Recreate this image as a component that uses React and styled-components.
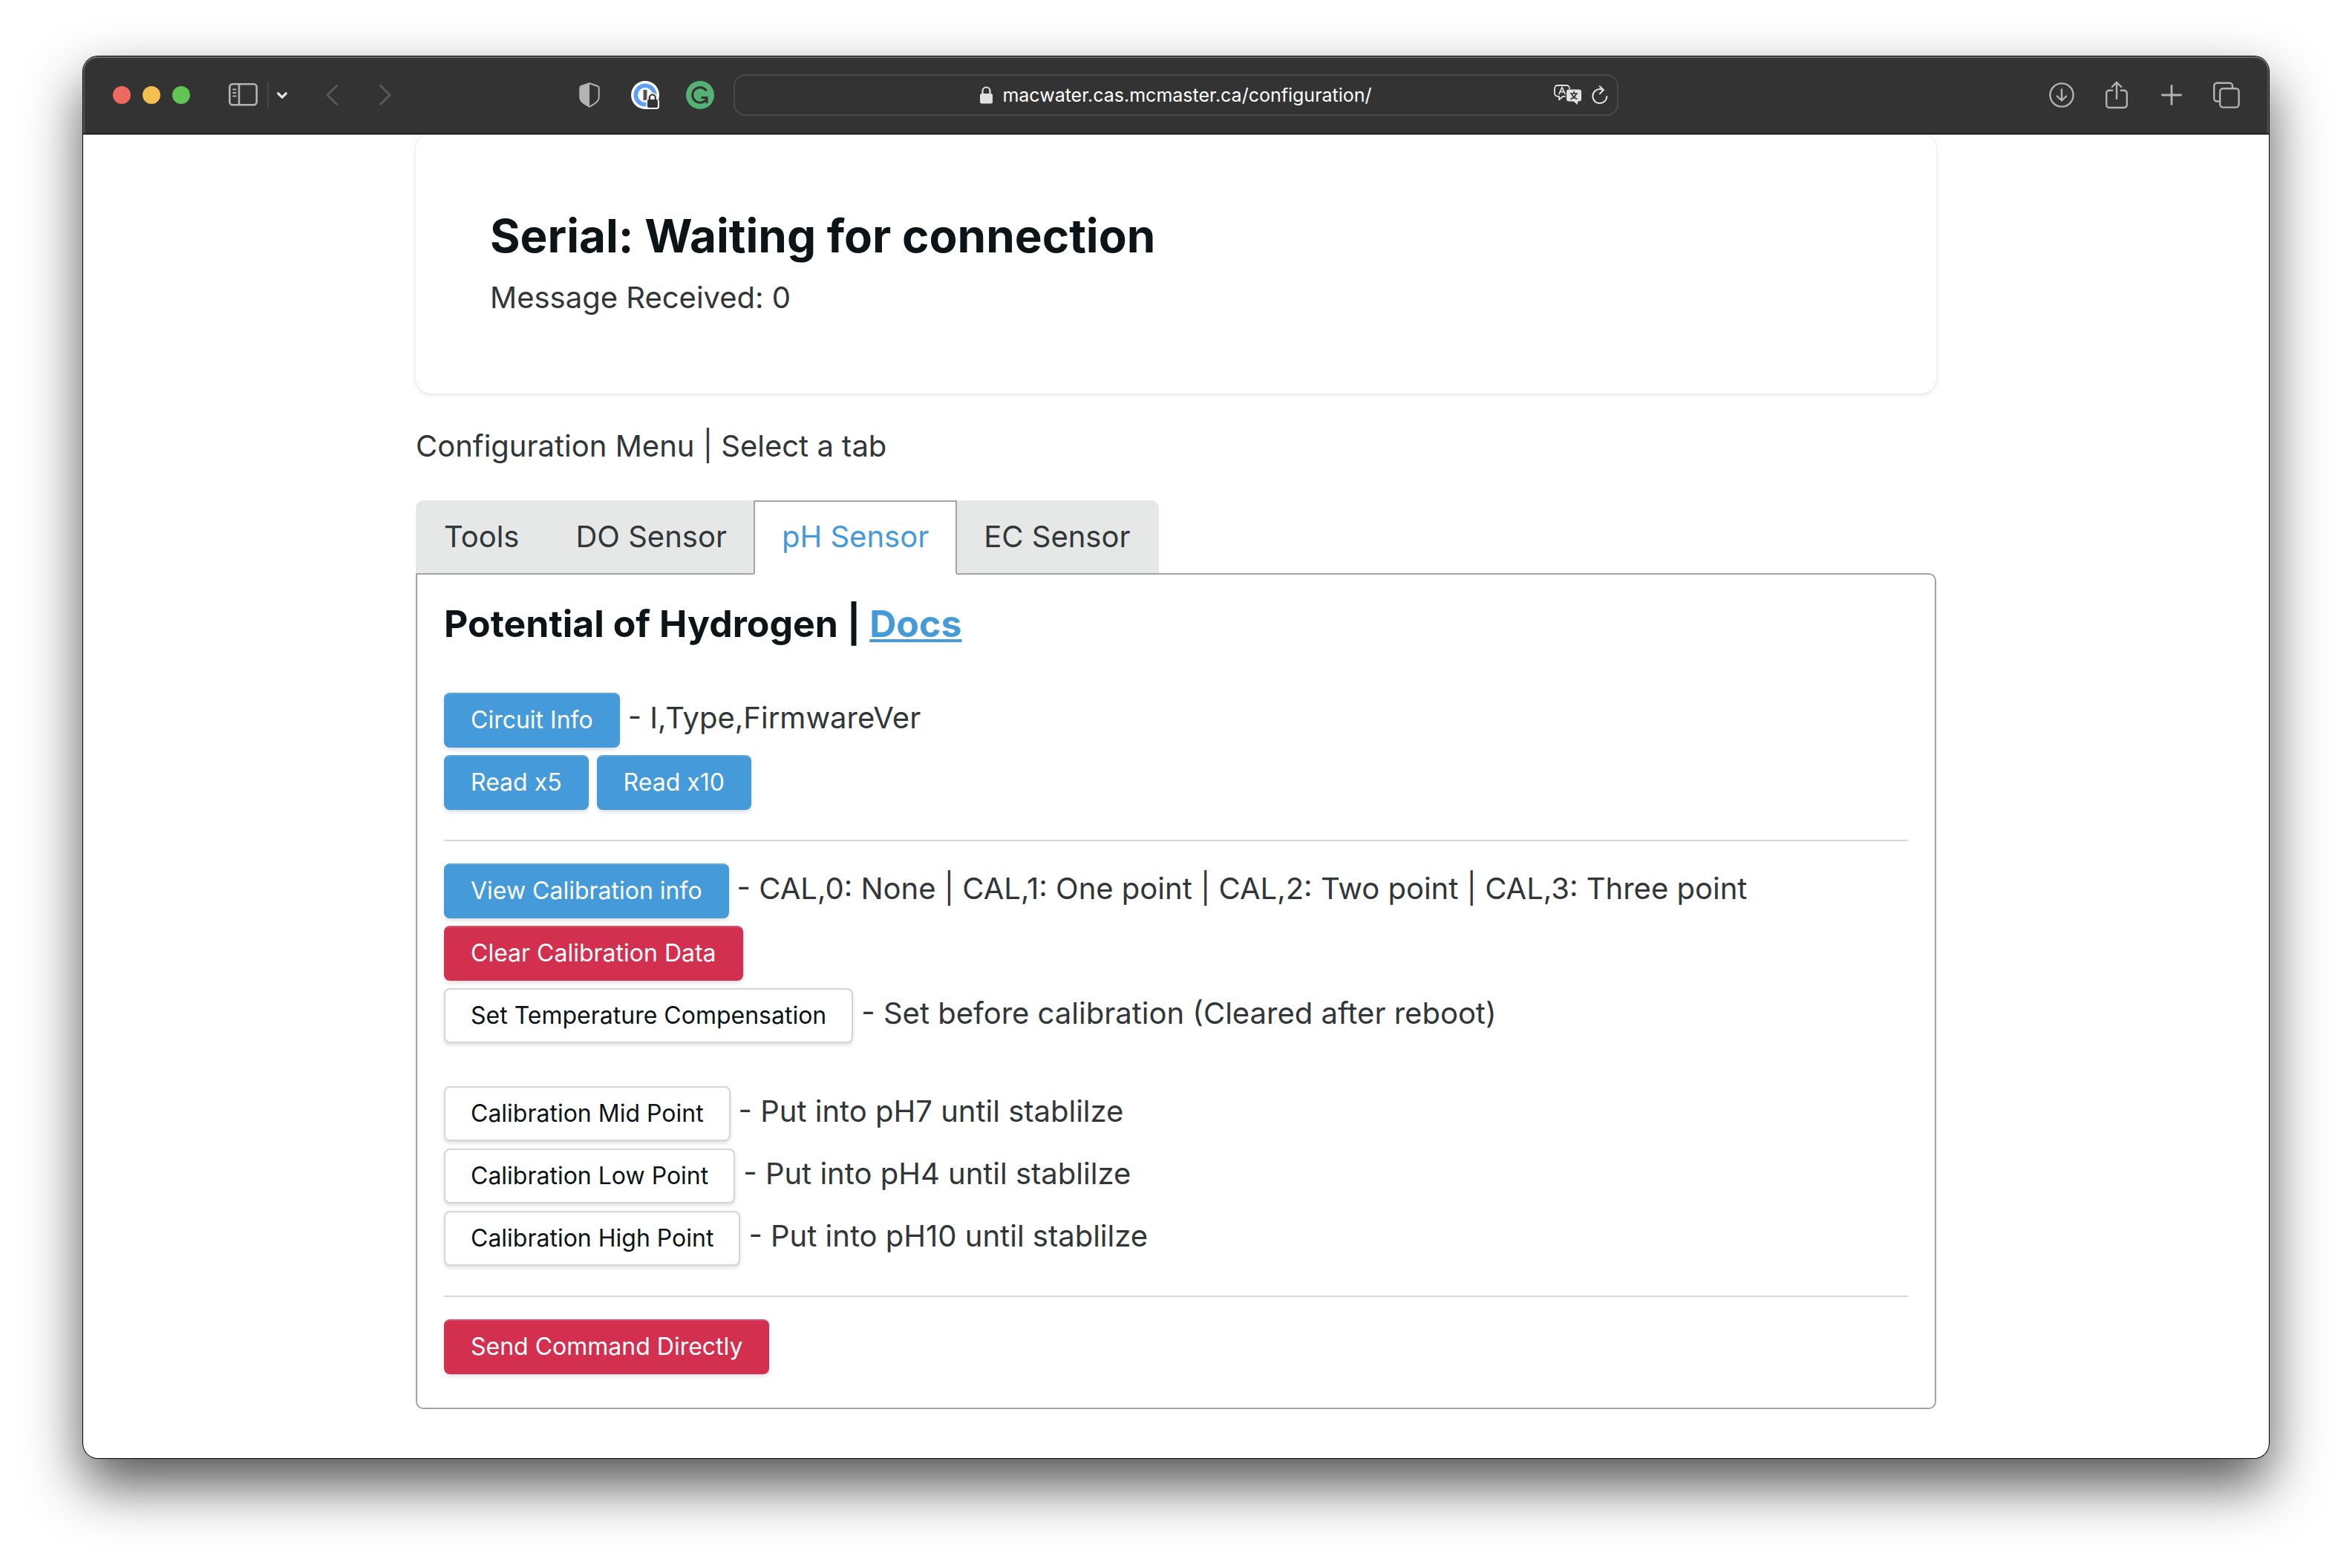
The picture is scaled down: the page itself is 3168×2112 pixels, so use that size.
import React, { useState } from "react";
import styled, { createGlobalStyle, css } from "styled-components";

const GlobalStyle = createGlobalStyle`
  *, *::before, *::after { box-sizing: border-box; }
  body {
    margin: 0;
    background: #fff;
    color: #313639;
    font-family: Inter, "Liberation Sans", sans-serif;
    font-size: 40px;
    line-height: 58px;
  }
  button, input { font: inherit; }
`;

const Desktop = styled.div`
  display: flex;
  flex-direction: column;
  min-height: 100vh;
  padding: 76px 112px 148px;
  overflow: hidden;
`;

const BrowserWindow = styled.div`
  display: flex;
  flex: 1;
  flex-direction: column;
  border-radius: 20px;
  background: #fff;
  box-shadow: 0 0 0 1px #000, 0 36px 76px rgba(0, 0, 0, 0.68);
`;

const Toolbar = styled.header`
  display: grid;
  grid-template-columns: 1fr minmax(0, 1192px) 1fr;
  align-items: center;
  height: 105px;
  border-bottom: 1px solid #000;
  border-radius: 20px 20px 0 0;
  background: #333;
  box-shadow: inset 0 2px 0 #6b6b6b, inset 2px 0 0 #555, inset -2px 0 0 #555, 0 1px 0 #b8b8b8;
  color: #b3b3b3;
`;

const LeadingTools = styled.div`
  display: flex;
  align-items: center;
  padding: 0 26px 0 40px;
`;

const TrafficLights = styled.div`
  display: flex;
  gap: 16px;
  margin-right: 52px;
`;

const Light = styled.button`
  width: 24px;
  height: 24px;
  padding: 0;
  border: 0;
  border-radius: 50%;
  background: ${(p) => p.$color};
`;

const IconButton = styled.button`
  display: flex;
  flex: none;
  align-items: center;
  justify-content: center;
  width: ${(p) => p.$width || 38}px;
  height: 40px;
  padding: 0;
  border: 0;
  background: none;
  color: ${(p) => p.$color || "inherit"};

  svg { display: block; overflow: visible; }
`;

const Divider = styled.span`
  width: 2px;
  height: 36px;
  margin: 0 11px 0 12px;
  background: #484848;
`;

const History = styled.div`
  display: flex;
  gap: 56px;
  margin-left: 52px;
`;

const Extensions = styled.div`
  display: flex;
  gap: 36px;
  margin-left: auto;
`;

const AddressBar = styled.div`
  display: grid;
  grid-template-columns: 1fr auto 1fr;
  align-items: center;
  height: 56px;
  padding: 0 12px;
  border: 2px solid #4a4a4a;
  border-radius: 16px;
  color: #e2e2e2;
`;

const Address = styled.label`
  display: flex;
  grid-column: 2;
  align-items: center;
  gap: 13px;
`;

const AddressInput = styled.input`
  field-sizing: content;
  padding: 0;
  border: 0;
  outline: 0;
  background: none;
  color: #fff;
  font-size: 25px;
  line-height: 36px;
`;

const AddressActions = styled.div`
  display: flex;
  justify-content: flex-end;
  gap: 13px;
`;

const TrailingTools = styled.div`
  display: flex;
  justify-content: flex-end;
  gap: 36px;
  padding-right: 38px;
`;

const Viewport = styled.main`
  flex: 1;
  overflow: hidden;
  border-radius: 0 0 20px 20px;
  padding: 0 48px 66px;
`;

const Container = styled.div`
  max-width: 2048px;
  margin: 0 auto;
`;

const Card = styled.section`
  padding: 100px;
  margin-top: -1px;
  border-radius: 20px;
  box-shadow: 0 2px 6px rgba(0, 0, 0, 0.1), 0 0 2px rgba(0, 0, 0, 0.1);
`;

const Title = styled.h1`
  margin: 0 0 16px;
  color: #0d1418;
  font-size: 62px;
  font-weight: 700;
  line-height: 76px;
`;

const Text = styled.p`
  margin: 0;
`;

const MenuLabel = styled.p`
  margin: 42px 0 44px;
`;

const TabList = styled.div`
  display: flex;
`;

const Tab = styled.button`
  padding: 18px 36px;
  border: 2px solid #e6e8e7;
  background: #e6e8e7;
  color: #313639;

  &:first-child { border-top-left-radius: 10px; }
  &:last-child { border-top-right-radius: 10px; }

  ${(p) =>
    p.$active &&
    css`
      z-index: 1;
      margin: 0 -2px -2px;
      padding-bottom: 20px;
      border-color: #a2a3a3;
      border-bottom-color: #fff;
      background: #fff;
      color: #459ad9;
    `}
`;

const Panel = styled.section`
  padding: 34px 36px 40px;
  border: 2px solid #a2a3a3;
  border-radius: 0 10px 10px 10px;
`;

const PanelTitle = styled.h2`
  margin: 0 0 56px;
  color: #0d1418;
  font-size: 50px;
  font-weight: 700;
  line-height: 64px;
`;

const DocsLink = styled.a`
  color: #459ad9;
  text-decoration-thickness: 4px;
  text-underline-offset: 3px;
  text-decoration-skip-ink: none;
`;

const Group = styled.div`
  & + & { margin-top: 48px; }
`;

const Row = styled.div`
  display: flex;
  align-items: baseline;
  gap: 11px;
  padding: 5px 0;
`;

const tones = {
  primary: css`
    border-color: #459ad9;
    border-top-color: #5da7de;
    background: #459ad9;
    color: #fff;
  `,
  danger: css`
    border-color: #d32f4f;
    border-top-color: #da4f6a;
    background: #d32f4f;
    color: #fff;
  `,
  plain: css`
    border-color: #d4d5d5;
    background: #fff;
    color: #0d1418;
  `,
};

const Button = styled.button`
  height: 74px;
  padding: 0 34px;
  border: 2px solid;
  border-radius: 8px;
  box-shadow: 0 3px 5px rgba(0, 0, 0, 0.12);
  font-size: 32px;
  line-height: 70px;
  ${(p) => tones[p.$tone || "plain"]}
`;

const Rule = styled.hr`
  height: 2px;
  margin: 35px 0 25px;
  border: 0;
  background: #d6d7d7;
`;

const stroke = { fill: "none", stroke: "currentColor", strokeLinecap: "round", strokeLinejoin: "round" };

const SidebarIcon = () => (
  <svg width="40" height="32" viewBox="0 0 40 32" {...stroke} strokeWidth="2.6">
    <rect x="1.3" y="1.3" width="36.4" height="28" rx="4" />
    <path d="M14 1.5v27.6" />
    <path d="M6 8.5h3.6M6 13h3.6M6 17.5h3.6" strokeWidth="1.8" />
  </svg>
);
const ChevronDownIcon = () => (
  <svg width="14" height="9" viewBox="0 0 14 9" {...stroke} strokeWidth="3.2">
    <path d="M1.7 1.8 7 7.2l5.3-5.4" />
  </svg>
);
const BackIcon = () => (
  <svg width="16" height="28" viewBox="0 0 16 28" {...stroke} strokeWidth="2.8">
    <path d="M14.6 1.4 1.8 14l12.8 12.6" />
  </svg>
);
const ForwardIcon = () => (
  <svg width="16" height="28" viewBox="0 0 16 28" {...stroke} strokeWidth="2.8">
    <path d="M1.4 1.4 14.2 14 1.4 26.6" />
  </svg>
);
const ShieldIcon = () => (
  <svg width="30" height="34" viewBox="0 0 30 34">
    <path d="M14 1.3 25 5c1.2.5 1.7 1.2 1.7 2.500v13c0 5-5 8.500-12.700 12.200C6.300 29 1.300 25.500 1.300 20.500v-13C1.300 6.200 1.800 5.500 3 5Z" {...stroke} strokeWidth="2" />
    <path d="M14 1 3 4.600C1.500 5.200.8 6 .8 7.500v13c0 5.200 5.200 8.900 13.200 12.700Z" fill="currentColor" />
  </svg>
);
const PasswordIcon = () => (
  <svg width="38" height="38" viewBox="0 0 38 38">
    <circle cx="19" cy="19" r="19" fill="#fff" />
    <circle cx="19" cy="19" r="12.700" fill="#fff" stroke="#5f9ff6" strokeWidth="5.600" />
    <rect x="16.500" y="12" width="5" height="14" rx=".6" fill="#555" />
    <path d="M20.500 27c0-2 .8-2.600 1.700-3v-2c0-3.500 2.800-6.200 6.300-6.200s6.300 2.700 6.300 6.200v2c1.700.5 3.200 1.500 3.200 3.500v7c0 2.200-1.300 3.500-3.500 3.500H20.500Z" fill="#fff" />
    <rect x="22" y="25" width="14" height="11" rx="2" fill="#333" />
    <path d="M24.800 26v-3.500a4 4 0 0 1 8 0V26" fill="none" stroke="#333" strokeWidth="2.200" />
  </svg>
);
const GrammarIcon = () => (
  <svg width="38" height="38" viewBox="0 0 38 38">
    <circle cx="19" cy="19" r="19" fill="#55b274" />
    <path d="M27 12.500A10.300 10.300 0 1 0 28 24" fill="none" stroke="#333" strokeWidth="3" strokeLinecap="round" />
    <path d="M20.500 22.500H28V30" fill="none" stroke="#333" strokeWidth="3" />
  </svg>
);
const LockIcon = () => (
  <svg width="17" height="24" viewBox="0 0 17 24">
    <rect x="0" y="10" width="17" height="13.500" rx="2.500" fill="currentColor" />
    <path d="M3.500 11V6.500a5 5 0 0 1 10 0V11" fill="none" stroke="currentColor" strokeWidth="2.200" />
  </svg>
);
const TranslateIcon = () => (
  <svg width="38" height="28" viewBox="0 0 38 28" {...stroke} strokeWidth="1.800">
    <path d="M15 15.800h-2.700L7 20.300v-4.500H5.200A4.200 4.200 0 0 1 1 11.600V5.200A4.200 4.200 0 0 1 5.200 1h11.600A4.200 4.200 0 0 1 21 5.200" />
    <path d="M7 12.500 11 3.500l4 9M8.300 9.700h5.400" />
    <path d="M20.300 6.500h13.400a3.300 3.300 0 0 1 3.300 3.300v9.400a3.300 3.300 0 0 1-3.300 3.300H32v4.700l-5.500-4.700h-6.200a3.300 3.300 0 0 1-3.300-3.300V9.800a3.300 3.300 0 0 1 3.300-3.300Z" fill="currentColor" stroke="none" />
    <path d="M22.500 12h9M27 9.500V12M30 12.300c-.8 3-3.500 5.700-7 7M24 12.300c.8 3 3.500 5.700 7 7" stroke="#333" strokeWidth="1.700" />
  </svg>
);
const ReloadIcon = () => (
  <svg width="22" height="26" viewBox="0 0 22 26" {...stroke} strokeWidth="2">
    <path d="M20.300 15A9.500 9.500 0 1 1 15.500 6.300" />
    <path d="m10.800 1.200 5 5-5 5" />
  </svg>
);
const DownloadIcon = () => (
  <svg width="34" height="34" viewBox="0 0 34 34" {...stroke} strokeWidth="2.400">
    <circle cx="17" cy="17" r="15.600" />
    <path d="M17 9.500V24M10.800 18.500 17 24.500l6.200-6" />
  </svg>
);
const ShareIcon = () => (
  <svg width="30" height="38" viewBox="0 0 30 38" {...stroke} strokeWidth="2.400">
    <path d="M9.200 12.800H5A3.800 3.800 0 0 0 1.200 16.600v15.600A3.800 3.800 0 0 0 5 36h20a3.800 3.800 0 0 0 3.800-3.800V16.600A3.800 3.800 0 0 0 25 12.800h-4.200" />
    <path d="M15 24V2M8.800 8 15 1.800 21.200 8" />
  </svg>
);
const PlusIcon = () => (
  <svg width="28" height="28" viewBox="0 0 28 28" {...stroke} strokeWidth="2.800">
    <path d="M14 1.400v25.200M1.400 14h25.200" />
  </svg>
);
const TabsIcon = () => (
  <svg width="36" height="36" viewBox="0 0 36 36" {...stroke} strokeWidth="2.400">
    <rect x="9.200" y="9.200" width="25.400" height="25.400" rx="4" />
    <path d="M9 26.500H5.200a4 4 0 0 1-4-4V5.700a4 4 0 0 1 4-4H22a4 4 0 0 1 4 4V9" />
  </svg>
);

const sections = [
  [
    [
      { actions: [{ label: "Circuit Info", tone: "primary" }], note: "- I,Type,FirmwareVer" },
      { actions: [{ label: "Read x5", tone: "primary" }, { label: "Read x10", tone: "primary" }] },
    ],
  ],
  [
    [
      {
        actions: [{ label: "View Calibration info", tone: "primary" }],
        note: "- CAL,0: None | CAL,1: One point | CAL,2: Two point | CAL,3: Three point",
      },
      { actions: [{ label: "Clear Calibration Data", tone: "danger" }] },
      {
        actions: [{ label: "Set Temperature Compensation" }],
        note: "- Set before calibration (Cleared after reboot)",
      },
    ],
    [
      { actions: [{ label: "Calibration Mid Point" }], note: "- Put into pH7 until stablilze" },
      { actions: [{ label: "Calibration Low Point" }], note: "- Put into pH4 until stablilze" },
      { actions: [{ label: "Calibration High Point" }], note: "- Put into pH10 until stablilze" },
    ],
  ],
  [[{ actions: [{ label: "Send Command Directly", tone: "danger" }] }]],
];

const tabs = ["Tools", "DO Sensor", "pH Sensor", "EC Sensor"];

function BrowserToolbar() {
  return (
    <Toolbar>
      <LeadingTools>
        <TrafficLights>
          <Light $color="#ed6a5e" aria-label="Close" />
          <Light $color="#f5bf4f" aria-label="Minimize" />
          <Light $color="#61c554" aria-label="Zoom" />
        </TrafficLights>
        <IconButton $width={40} aria-label="Sidebar"><SidebarIcon /></IconButton>
        <Divider />
        <IconButton $width={14} $color="#e6e6e6" aria-label="Tab groups"><ChevronDownIcon /></IconButton>
        <History>
          <IconButton $width={16} $color="#5a5a5a" aria-label="Back"><BackIcon /></IconButton>
          <IconButton $width={16} $color="#5a5a5a" aria-label="Forward"><ForwardIcon /></IconButton>
        </History>
        <Extensions>
          <IconButton aria-label="Privacy report"><ShieldIcon /></IconButton>
          <IconButton aria-label="Passwords"><PasswordIcon /></IconButton>
          <IconButton aria-label="Grammar"><GrammarIcon /></IconButton>
        </Extensions>
      </LeadingTools>
      <AddressBar>
        <Address>
          <LockIcon />
          <AddressInput aria-label="Address" defaultValue="macwater.cas.mcmaster.ca/configuration/" />
        </Address>
        <AddressActions>
          <IconButton aria-label="Translate"><TranslateIcon /></IconButton>
          <IconButton $width={22} aria-label="Reload"><ReloadIcon /></IconButton>
        </AddressActions>
      </AddressBar>
      <TrailingTools>
        <IconButton aria-label="Downloads"><DownloadIcon /></IconButton>
        <IconButton aria-label="Share"><ShareIcon /></IconButton>
        <IconButton aria-label="New tab"><PlusIcon /></IconButton>
        <IconButton aria-label="Tab overview"><TabsIcon /></IconButton>
      </TrailingTools>
    </Toolbar>
  );
}

export default function App() {
  const [active, setActive] = useState("pH Sensor");

  return (
    <Desktop>
      <GlobalStyle />
      <BrowserWindow>
        <BrowserToolbar />
        <Viewport>
          <Container>
            <Card>
              <Title>Serial: Waiting for connection</Title>
              <Text>Message Received: 0</Text>
            </Card>
            <MenuLabel>Configuration Menu | Select a tab</MenuLabel>
            <TabList role="tablist">
              {tabs.map((name) => (
                <Tab
                  key={name}
                  role="tab"
                  aria-selected={name === active}
                  $active={name === active}
                  onClick={() => setActive(name)}
                >
                  {name}
                </Tab>
              ))}
            </TabList>
            <Panel role="tabpanel">
              <PanelTitle>
                Potential of Hydrogen | <DocsLink href="#docs">Docs</DocsLink>
              </PanelTitle>
              {sections.map((groups, s) => (
                <React.Fragment key={s}>
                  {s > 0 && <Rule />}
                  {groups.map((rows, g) => (
                    <Group key={g}>
                      {rows.map((row) => (
                        <Row key={row.actions[0].label}>
                          {row.actions.map((a) => (
                            <Button key={a.label} type="button" $tone={a.tone}>{a.label}</Button>
                          ))}
                          {row.note && <span>{row.note}</span>}
                        </Row>
                      ))}
                    </Group>
                  ))}
                </React.Fragment>
              ))}
            </Panel>
          </Container>
        </Viewport>
      </BrowserWindow>
    </Desktop>
  );
}
